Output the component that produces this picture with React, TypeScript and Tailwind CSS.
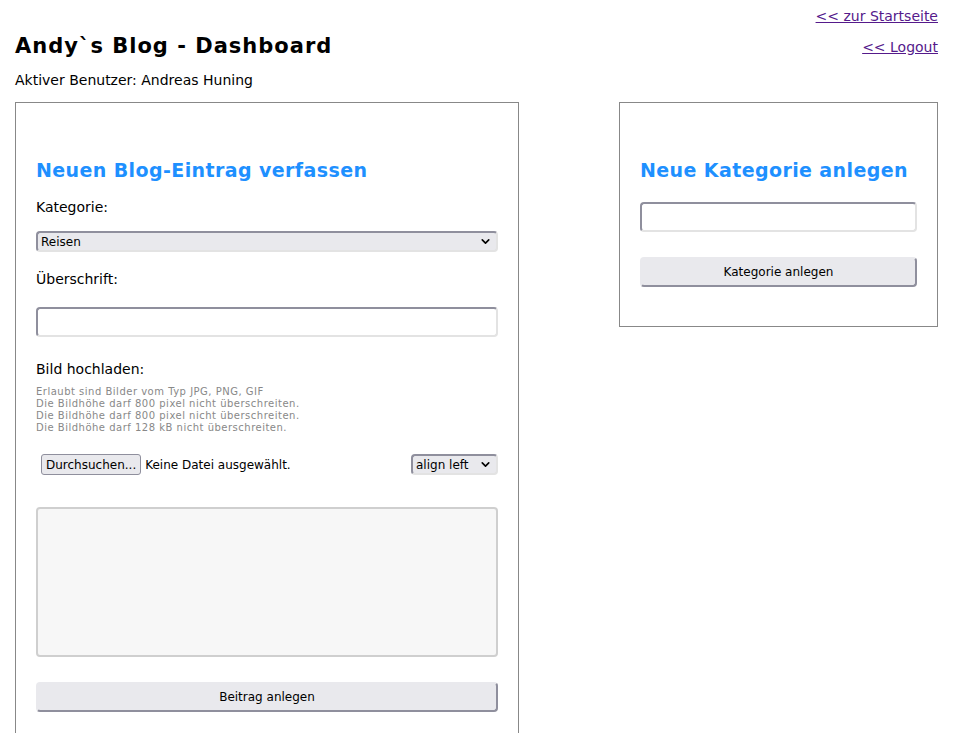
import { ChevronDown } from "lucide-react";

const inputCls =
  "w-full h-[30px] rounded-[4px] border-2 border-t-[#8f8f9d] border-l-[#8f8f9d] border-b-[#e3e3e3] border-r-[#e3e3e3] bg-white px-2 outline-none";

const buttonCls =
  "w-full h-[30px] rounded-[4px] border-2 border-t-[#e9e9ed] border-l-[#e9e9ed] border-b-[#8f8f9d] border-r-[#8f8f9d] bg-[#e9e9ed] text-[12px] text-black";

const FakeSelect = ({ value, className }: any) => {
  return (
    <div
      className={
        "flex items-center justify-between rounded-[4px] border-2 border-t-[#8f8f9d] border-l-[#8f8f9d] border-b-[#e3e3e3] border-r-[#e3e3e3] bg-[#e9e9ed] pl-[3px] pr-[4px] text-[12px] text-black " +
        className
      }
    >
      <span>{value}</span>
      <ChevronDown size={13} strokeWidth={3} />
    </div>
  );
};

export default function App() {
  return (
    <div className="min-h-[733px] bg-white px-[15px] font-['DejaVu_Sans',Verdana,sans-serif] text-black">
      <div className="flex justify-between">
        <div>
          <h1 className="mt-[32px] text-[21px] font-bold leading-[28px] tracking-[1px]">
            Andy`s Blog - Dashboard
          </h1>
          <p className="mt-[10px] text-[14px] leading-[20px]">
            Aktiver Benutzer: Andreas Huning
          </p>
        </div>
        <div className="flex flex-col items-end pr-[3px] text-[14px] leading-[18px] text-[#551a8b]">
          <a href="#" className="mt-[7px] underline">
            &lt;&lt; zur Startseite
          </a>
          <a href="#" className="mt-[13px] underline">
            &lt;&lt; Logout
          </a>
        </div>
      </div>

      <div className="mt-[12px] flex items-start justify-between pr-[3px]">
        <section className="h-[640px] w-[504px] border border-[#888] px-[20px]">
          <h2 className="mt-[54px] text-[19px] font-bold leading-[26px] tracking-[0.4px] text-[#1e90ff]">
            Neuen Blog-Eintrag verfassen
          </h2>
          <p className="mt-[14px] text-[14px] leading-[20px]">Kategorie:</p>
          <FakeSelect value="Reisen" className="mt-[14px] h-[21px]" />
          <p className="mt-[17px] text-[14px] leading-[20px]">Überschrift:</p>
          <input className={inputCls + " mt-[18px]"} />
          <p className="mt-[22px] text-[14px] leading-[20px]">Bild hochladen:</p>
          <div className="mt-[7px] text-[10px] leading-[12px] tracking-[0.5px] text-[#888]">
            <div>Erlaubt sind Bilder vom Typ JPG, PNG, GIF</div>
            <div>Die Bildhöhe darf 800 pixel nicht überschreiten.</div>
            <div>Die Bildhöhe darf 800 pixel nicht überschreiten.</div>
            <div>Die Bildhöhe darf 128 kB nicht überschreiten.</div>
          </div>
          <div className="mt-[20px] flex items-center justify-between pl-[5px]">
            <div className="flex items-center gap-[4px] text-[12px]">
              <span className="flex h-[21px] items-center rounded-[3px] border border-[#8f8f9d] bg-[#e9e9ed] px-[4px]">
                Durchsuchen...
              </span>
              <span>Keine Datei ausgewählt.</span>
            </div>
            <FakeSelect value="align left" className="h-[21px] w-[87px]" />
          </div>
          <textarea className="mt-[32px] block h-[150px] w-full resize-none rounded-[4px] border-2 border-[#cfcfcf] bg-[#f7f7f7] outline-none" />
          <button className={buttonCls + " mt-[25px]"}>Beitrag anlegen</button>
        </section>

        <section className="w-[319px] border border-[#888] px-[20px] pb-[39px]">
          <h2 className="mt-[54px] text-[19px] font-bold leading-[26px] tracking-[0.4px] text-[#1e90ff]">
            Neue Kategorie anlegen
          </h2>
          <input className={inputCls + " mt-[19px]"} />
          <button className={buttonCls + " mt-[25px]"}>Kategorie anlegen</button>
        </section>
      </div>
    </div>
  );
}
